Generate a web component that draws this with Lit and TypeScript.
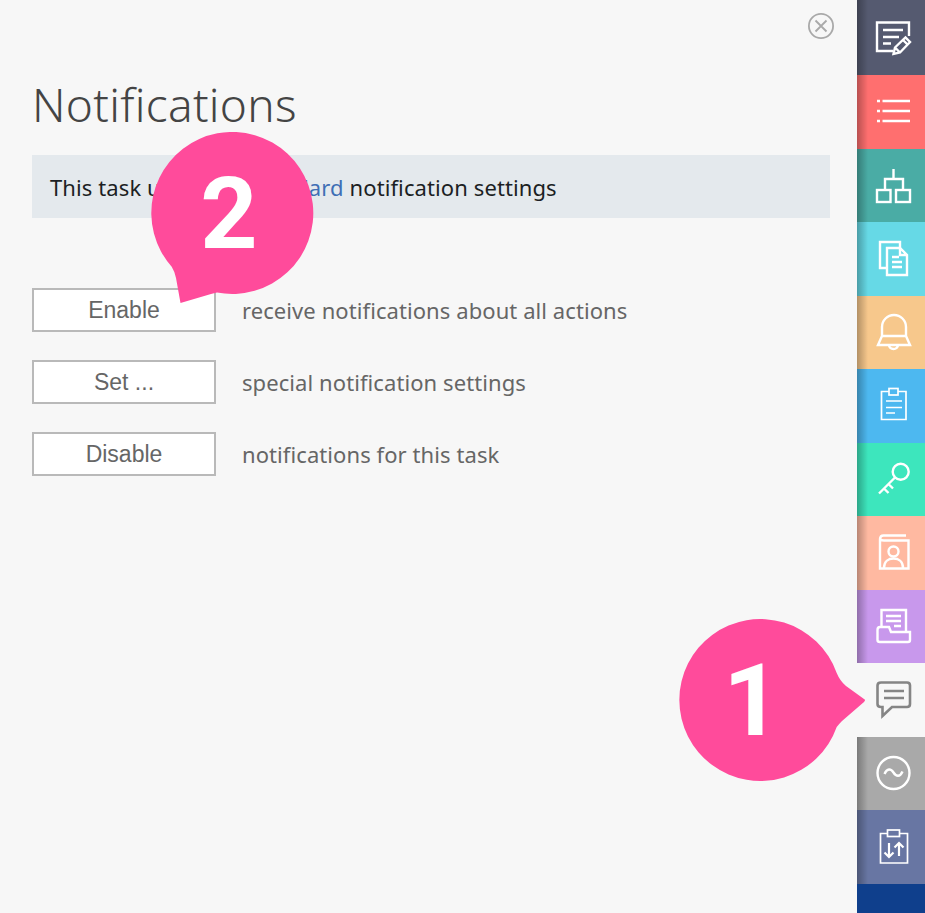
import { LitElement, html, css, svg } from "lit";
import { customElement } from "lit/decorators.js";

const icons = [
  svg`<path d="M36 51H20V22.500H52V36M26 30H46M26 37H42M26 43.500H34"/><path d="M36.500 54L38 47.500L48.500 37.500L53 42L43 52.500ZM38 47.500L43 52.500M46 40L50.500 44.500"/>`,
  svg`<path d="M20 26H23M25.500 26H53M20 36H23M25.500 36H53M20 46H23M25.500 46H53"/>`,
  svg`<path d="M36.500 20V30M28 41V30H46V41"/><rect x="20" y="41" width="13.500" height="12"/><rect x="39" y="41" width="14" height="12"/>`,
  svg`<path d="M30 46H23V20H43V26"/><path d="M30 26H43L50 33V53H30ZM43 26V33H50M35 35H42M35 40H45M35 45H45"/>`,
  svg`<path d="M21 49L25 40V31A11.800 11.800 0 0 1 49 31V40L53 49ZM25 40H49M32 49A4.500 4 0 0 0 41 49"/>`,
  svg`<g stroke-width="1.700"><path d="M32 22.500H24.500V50.500H49V22.500H41M29 32H45M29 38.500H45M29 44H38"/><rect x="32" y="19.500" width="9" height="6.500"/></g>`,
  svg`<circle cx="43.700" cy="28.700" r="8"/><path d="M38 34.500L22 50.500M27 45.500L31.500 50M31.500 41L36 45.500"/>`,
  svg`<path d="M49 19.500H26.500Q23 19.500 23 23.500V52.500H51.500V24.500H27Q23 24.500 23 22"/><circle cx="36.500" cy="35.500" r="5"/><path d="M27 52C27 45 32 42.500 36.500 42.500S46 45 46 52"/>`,
  svg`<path d="M24.500 37V20H49V42M29 26H44M29 31H44M37 36H44"/><path d="M20.500 40Q20.500 37 23 37H32L34 42H53V50Q53 52 51 52H23Q20.500 52 20.500 50Z"/>`,
  svg`<path stroke-width="2.600" d="M24 19.500H50Q53 19.500 53 22.500V41Q53 44 50 44H35L25.500 53V44H24Q20.500 44 20.500 41V22.500Q20.500 19.500 24 19.500ZM27 28H47M27 35H47"/>`,
  svg`<circle cx="36.500" cy="36" r="16"/><path d="M27.500 37C30 31 34 31.500 36.500 35.500S43 40.500 45.500 34.500"/>`,
  svg`<g stroke-width="1.700"><path d="M30.500 23.500H23.500V53H50.500V23.500H42.500"/><rect x="30.500" y="20" width="12" height="6.500"/><path stroke-width="2.200" d="M32 33V47M27.500 42.500L32 47L36.500 42.500M42 46V33M37.500 37.500L42 33L46.500 37.500"/></g>`,
];

const rows: { cls: string }[] = [
  { cls: "first" }, { cls: "red" }, { cls: "teal" }, { cls: "cyan" },
  { cls: "orange" }, { cls: "blue" }, { cls: "mint" }, { cls: "salmon" },
  { cls: "purple" }, { cls: "plain" }, { cls: "gray" }, { cls: "indigo" },
];

const actions = [
  ["Enable", "receive notifications about all actions"],
  ["Set ...", "special notification settings"],
  ["Disable", "notifications for this task"],
];

@customElement("app-root")
export class AppRoot extends LitElement {
  static styles = css`
    :host { display: flex; height: 913px; overflow: hidden; position: relative; font-family: "Noto Sans", sans-serif; }
    .main { flex: 1; background: #f7f7f7; padding: 13px 27px 0 32px; display: flex; flex-direction: column; min-width: 0; }
    .close { align-self: flex-end; margin-right: -4px; width: 26px; height: 26px; display: block; fill: none; stroke: #a9a9a9; stroke-width: 1.800; }
    h1 { margin: 34px 0 0; font-size: 46px; line-height: 62px; font-weight: 300; color: #444; letter-spacing: 0.3px; white-space: nowrap; }
    .banner { margin-top: 20px; height: 63px; background: #e4e9ed; display: flex; align-items: center; padding: 0 0 0 18px; box-sizing: border-box; font-size: 22px; letter-spacing: 0.1px; color: #1c1f24; white-space: pre; }
    .banner a { color: #3f6fb5; text-decoration: none; margin-left: 10px; }
    .list { margin-top: 70px; display: flex; flex-direction: column; gap: 28px; }
    .item { display: flex; align-items: center; gap: 26px; height: 44px; }
    button { width: 184px; height: 44px; box-sizing: border-box; border: 2px solid #b9b9b9; background: #fff; color: #666; font: 23px "Liberation Sans", sans-serif; padding: 0; border-radius: 0; }
    .item span { font-size: 22px; letter-spacing: 0.08px; color: #666; white-space: nowrap; }
    .side { width: 68px; flex: none; display: flex; flex-direction: column; background: #0f3f8c; }
    .row { height: 73.550px; flex: none; position: relative; }
    .row.first { height: 75px; background: #555a70; }
    .row::before { content: ""; position: absolute; inset: 0 auto 0 0; width: 11px; background: linear-gradient(to right, rgba(0,0,0,.28), rgba(0,0,0,0)); }
    .row.plain::before { display: none; }
    .row svg { display: block; width: 68px; height: 74px; position: relative; fill: none; stroke: #fff; stroke-width: 2.400; }
    .red { background: #ff6f6f; } .teal { background: #4aaca5; } .cyan { background: #66d9e6; }
    .orange { background: #f7c88c; } .blue { background: #4db8f0; } .mint { background: #3de6bd; }
    .salmon { background: #ffb9a1; } .purple { background: #c898ec; } .plain { background: #f7f7f7; }
    .gray { background: #a9a9a9; } .indigo { background: #6876a3; }
    .row.plain svg { stroke: #858585; }
    .bubble { position: absolute; display: block; width: 190px; height: 175px; fill: #ff4b9b; }
    .b1 { left: 679px; top: 619px; }
    .b2 { left: 151px; top: 132px; }
    .bubble text { fill: #fff; font-family: "Roboto", sans-serif; font-weight: 700; font-size: 100px; text-anchor: middle; }
  `;

  render() {
    return html`
      <div class="main">
        <svg class="close" viewBox="0 0 26 26"><circle cx="13" cy="13" r="12.100"/><path d="M7.500 7.500L18.500 18.500M18.500 7.500L7.500 18.500"/></svg>
        <h1>Notifications</h1>
        <div class="banner">This task uses the <a href="#">standard</a> notification settings</div>
        <div class="list">
          ${actions.map(([b, t]) => html`<div class="item"><button>${b}</button><span>${t}</span></div>`)}
        </div>
      </div>
      <div class="side">
        ${rows.map((r, i) => html`<div class="row ${r.cls}"><svg viewBox="0 0 68 74">${icons[i]}</svg></div>`)}
      </div>
      <svg class="bubble b1" viewBox="0 0 190 175">
        <path d="M157.700 54Q161 62 167 67L185 80Q187 81 185 83L163 102Q160 105 157.700 108A81 81 0 1 1 157.700 54Z"/>
        <text x="73" y="116">1</text>
      </svg>
      <svg class="bubble b2" viewBox="0 0 190 175">
        <path d="M20.700 134.700Q24 140 25 146L29.500 171L60 162Q63 161 66 160.500A81 81 0 1 0 20.700 134.700Z"/>
        <text x="78" y="116">2</text>
      </svg>
    `;
  }
}
